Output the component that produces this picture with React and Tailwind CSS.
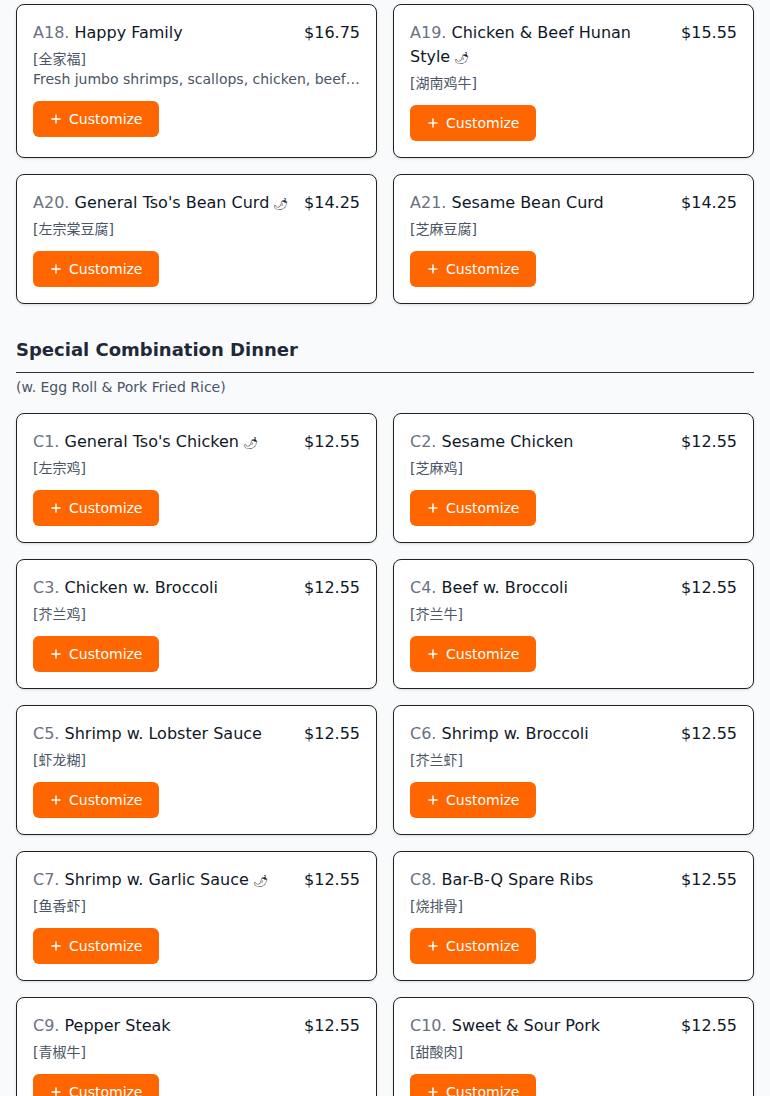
import React from 'react';
import { Plus } from 'lucide-react';

const topItems = [
  { code: 'A18.', name: 'Happy Family', zh: '全家福', price: '$16.75', desc: 'Fresh jumbo shrimps, scallops, chicken, beef, roast pork and mixed vegetables in brown sauce' },
  { code: 'A19.', name: 'Chicken & Beef Hunan Style', zh: '湖南鸡牛', price: '$15.55', spicy: true },
  { code: 'A20.', name: "General Tso's Bean Curd", zh: '左宗棠豆腐', price: '$14.25', spicy: true },
  { code: 'A21.', name: 'Sesame Bean Curd', zh: '芝麻豆腐', price: '$14.25' },
];

const comboItems = [
  { code: 'C1.', name: "General Tso's Chicken", zh: '左宗鸡', price: '$12.55', spicy: true },
  { code: 'C2.', name: 'Sesame Chicken', zh: '芝麻鸡', price: '$12.55' },
  { code: 'C3.', name: 'Chicken w. Broccoli', zh: '芥兰鸡', price: '$12.55' },
  { code: 'C4.', name: 'Beef w. Broccoli', zh: '芥兰牛', price: '$12.55' },
  { code: 'C5.', name: 'Shrimp w. Lobster Sauce', zh: '虾龙糊', price: '$12.55' },
  { code: 'C6.', name: 'Shrimp w. Broccoli', zh: '芥兰虾', price: '$12.55' },
  { code: 'C7.', name: 'Shrimp w. Garlic Sauce', zh: '鱼香虾', price: '$12.55', spicy: true },
  { code: 'C8.', name: 'Bar-B-Q Spare Ribs', zh: '烧排骨', price: '$12.55' },
  { code: 'C9.', name: 'Pepper Steak', zh: '青椒牛', price: '$12.55' },
  { code: 'C10.', name: 'Sweet & Sour Pork', zh: '甜酸肉', price: '$12.55' },
];

function MenuCard({ item }) {
  return (
    <div className="bg-white border border-[#222] rounded-lg shadow-sm p-4">
      <div className="flex justify-between items-start gap-3">
        <p className="text-base leading-6 text-gray-900">
          <span className="text-gray-500">{item.code}</span> {item.name}
          {item.spicy && <span className="text-xs"> 🌶</span>}
        </p>
        <p className="text-base leading-6 text-gray-900 shrink-0">{item.price}</p>
      </div>
      <p className="mt-1 text-sm leading-5 text-gray-600">[{item.zh}]</p>
      {item.desc && (
        <p className="text-sm leading-5 text-gray-600 truncate">{item.desc}</p>
      )}
      <button className="mt-3 h-9 px-4 flex items-center gap-1.5 bg-[#ff6600] text-white text-sm rounded-md">
        <Plus className="w-3.5 h-3.5" strokeWidth={2.5} />
        Customize
      </button>
    </div>
  );
}

export default function App() {
  return (
    <div
      className="min-h-screen bg-[#f9fafb] px-4 pt-1 pb-8"
      style={{ fontFamily: '"DejaVu Sans", "Noto Sans CJK SC", sans-serif' }}
    >
      <div className="grid grid-cols-2 gap-4">
        {topItems.map((item) => (
          <MenuCard key={item.code} item={item} />
        ))}
      </div>

      <div className="mt-8">
        <h2 className="text-lg leading-7 font-bold text-gray-800 pb-2 border-b border-[#333]">
          Special Combination Dinner
        </h2>
        <p className="mt-1 text-sm leading-5 text-gray-600">(w. Egg Roll &amp; Pork Fried Rice)</p>
      </div>

      <div className="mt-4 grid grid-cols-2 gap-4">
        {comboItems.map((item) => (
          <MenuCard key={item.code} item={item} />
        ))}
      </div>
    </div>
  );
}
